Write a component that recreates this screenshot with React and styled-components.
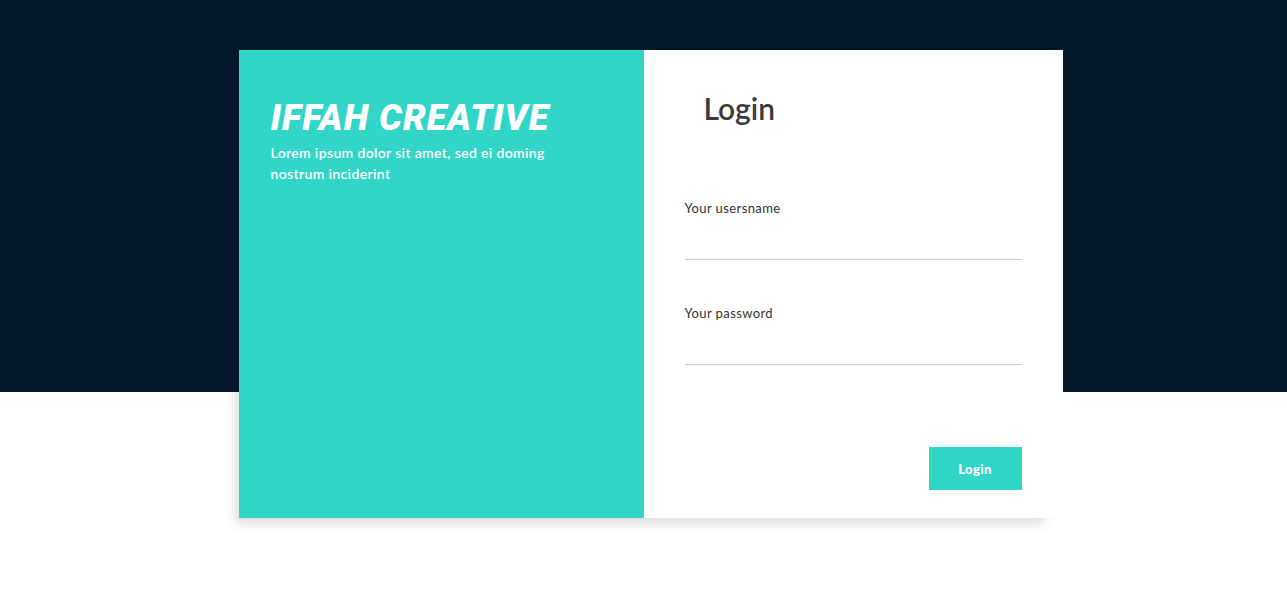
import React from "react";
import styled, { createGlobalStyle } from "styled-components";

const Global = createGlobalStyle`
  html, body { margin: 0; padding: 0; }
  body {
    background: linear-gradient(to bottom, #02182b 0, #02182b 392px, #ffffff 392px);
    min-height: 614px;
    font-family: Lato, "Open Sans", sans-serif;
  }
`;

const Page = styled.div`
  padding-top: 50px;
  overflow: hidden;
  min-height: 564px;
`;

const Card = styled.div`
  width: 810px;
  height: 468px;
  margin: 0 auto;
  display: flex;
  box-shadow: -4px 6px 10px rgba(0, 0, 0, 0.13);
`;

const Brand = styled.section`
  width: 405px;
  flex-shrink: 0;
  box-sizing: border-box;
  background: #32d6c8;
  padding: 48px 32px 0;
  color: #fff;
`;

const BrandTitle = styled.h1`
  margin: 0;
  font-family: Roboto, "Liberation Sans", sans-serif;
  font-style: italic;
  font-weight: 900;
  font-size: 36px;
  line-height: 40px;
  letter-spacing: 1px;
`;

const BrandText = styled.p`
  margin: 4px 0 0;
  width: 300px;
  font-size: 14px;
  line-height: 21px;
  font-weight: 600;
  letter-spacing: 0.35px;
`;

const FormPanel = styled.section`
  width: 419px;
  flex-shrink: 0;
  box-sizing: border-box;
  background: #fff;
  padding: 40px 41px 0;
  display: flex;
  flex-direction: column;
`;

const Heading = styled.h2`
  margin: 0 0 74px 19px;
  font-size: 30px;
  line-height: 36px;
  font-weight: 600;
  color: #3b3b3b;
`;

const Field = styled.label`
  display: flex;
  flex-direction: column;
  margin-bottom: ${(p) => p.$gap}px;
`;

const Label = styled.span`
  font-size: 13px;
  line-height: 16px;
  color: #333;
  letter-spacing: 0.4px;
  margin-bottom: 6px;
`;

const Input = styled.input`
  height: 38px;
  box-sizing: border-box;
  border: none;
  border-bottom: 1px solid #cfcfcf;
  outline: none;
  background: transparent;
  font-family: inherit;
  font-size: 14px;
  padding: 0;
`;

const Actions = styled.div`
  display: flex;
  justify-content: flex-end;
`;

const Button = styled.button`
  width: 93px;
  height: 43px;
  border: none;
  background: #32d6c8;
  color: #fff;
  font-family: inherit;
  font-weight: 900;
  font-size: 13px;
  letter-spacing: 0.4px;
  padding: 0;
  cursor: pointer;
`;

export default function App() {
  return (
    <>
      <Global />
      <Page>
        <Card>
          <Brand>
            <BrandTitle>IFFAH CREATIVE</BrandTitle>
            <BrandText>Lorem ipsum dolor sit amet, sed ei doming nostrum inciderint</BrandText>
          </Brand>
          <FormPanel>
            <Heading>Login</Heading>
            <Field $gap={45}>
              <Label>Your usersname</Label>
              <Input type="text" />
            </Field>
            <Field $gap={82}>
              <Label>Your password</Label>
              <Input type="password" />
            </Field>
            <Actions>
              <Button>Login</Button>
            </Actions>
          </FormPanel>
        </Card>
      </Page>
    </>
  );
}
